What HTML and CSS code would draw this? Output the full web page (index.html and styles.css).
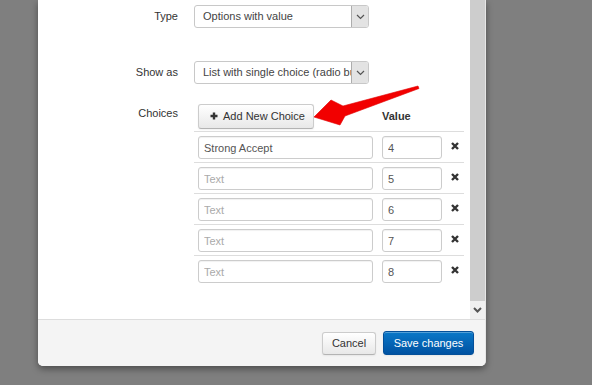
FILE: index.html
```html
<!DOCTYPE html>
<html>
<head>
<meta charset="utf-8">
<link rel="stylesheet" href="styles.css">
</head>
<body>
<div class="modal">
  <div class="modal-body">
    <div class="content">
      <div class="form-row">
        <label class="lbl">Type</label>
        <div class="select">
          <span class="select-text">Options with value</span>
          <span class="select-btn"><svg width="9" height="6" viewBox="0 0 9 6"><path d="M1 1 L4.5 4.5 L8 1" fill="none" stroke="#555" stroke-width="1.2"/></svg></span>
        </div>
      </div>
      <div class="form-row row-show">
        <label class="lbl">Show as</label>
        <div class="select">
          <span class="select-text">List with single choice (radio buttons)</span>
          <span class="select-btn"><svg width="9" height="6" viewBox="0 0 9 6"><path d="M1 1 L4.5 4.5 L8 1" fill="none" stroke="#555" stroke-width="1.2"/></svg></span>
        </div>
      </div>
      <div class="form-row row-choices">
        <label class="lbl lbl-top">Choices</label>
        <div class="choices">
          <div class="crow head">
            <div class="c1"><button class="btn btn-add"><svg class="plus" width="8" height="8" viewBox="0 0 8 8"><path d="M4 0.5 V7.5 M0.5 4 H7.5" stroke="#333" stroke-width="2.4"/></svg>Add New Choice</button></div>
            <div class="c2 vhead">Value</div>
            <div class="c3"></div>
          </div>
          <div class="crow">
            <div class="c1"><input class="inp inp-text" type="text" value="Strong Accept" placeholder="Text"></div>
            <div class="c2"><input class="inp inp-val" type="text" value="4"></div>
            <div class="c3"><svg class="rm" width="8" height="8" viewBox="0 0 8 8"><path d="M1 1 L7 7 M7 1 L1 7" stroke="#333" stroke-width="2.4"/></svg></div>
          </div>
          <div class="crow">
            <div class="c1"><input class="inp inp-text" type="text" placeholder="Text"></div>
            <div class="c2"><input class="inp inp-val" type="text" value="5"></div>
            <div class="c3"><svg class="rm" width="8" height="8" viewBox="0 0 8 8"><path d="M1 1 L7 7 M7 1 L1 7" stroke="#333" stroke-width="2.4"/></svg></div>
          </div>
          <div class="crow">
            <div class="c1"><input class="inp inp-text" type="text" placeholder="Text"></div>
            <div class="c2"><input class="inp inp-val" type="text" value="6"></div>
            <div class="c3"><svg class="rm" width="8" height="8" viewBox="0 0 8 8"><path d="M1 1 L7 7 M7 1 L1 7" stroke="#333" stroke-width="2.4"/></svg></div>
          </div>
          <div class="crow">
            <div class="c1"><input class="inp inp-text" type="text" placeholder="Text"></div>
            <div class="c2"><input class="inp inp-val" type="text" value="7"></div>
            <div class="c3"><svg class="rm" width="8" height="8" viewBox="0 0 8 8"><path d="M1 1 L7 7 M7 1 L1 7" stroke="#333" stroke-width="2.4"/></svg></div>
          </div>
          <div class="crow">
            <div class="c1"><input class="inp inp-text" type="text" placeholder="Text"></div>
            <div class="c2"><input class="inp inp-val" type="text" value="8"></div>
            <div class="c3"><svg class="rm" width="8" height="8" viewBox="0 0 8 8"><path d="M1 1 L7 7 M7 1 L1 7" stroke="#333" stroke-width="2.4"/></svg></div>
          </div>
        </div>
      </div>
    </div>
    <div class="scrollbar">
      <div class="thumb"></div>
      <div class="sb-btn"><svg width="9" height="6" viewBox="0 0 9 6"><path d="M1 1 L4.5 4.5 L8 1" fill="none" stroke="#555" stroke-width="2"/></svg></div>
    </div>
  </div>
  <div class="modal-footer">
    <button class="btn btn-cancel">Cancel</button>
    <button class="btn btn-primary">Save changes</button>
  </div>
</div>
<svg class="arrow" width="592" height="385" viewBox="0 0 592 385">
  <polygon points="418,86 343,106 331,100 314,117 340,125 345,116 419,88.5" fill="#f20000" stroke="#e00000" stroke-width="0.6" stroke-linejoin="round"/>
</svg>
</body>
</html>
```

FILE: styles.css
```css
html, body {
  margin: 0;
  padding: 0;
}
body {
  background: #7f7f7f;
  width: 592px;
  height: 385px;
  overflow: hidden;
  position: relative;
  font-family: "Liberation Sans", Arial, sans-serif;
  font-size: 11px;
  color: #333;
}
.modal {
  margin-left: 38px;
  width: 447px;
  border-right: 1px solid #e6e6e6;
  background: #fff;
  border-radius: 0 0 5px 5px;
  box-shadow: 0 3px 7px rgba(0, 0, 0, 0.4);
  overflow: hidden;
}
.modal-body {
  display: flex;
  height: 319px;
}
.content {
  flex: 1;
  padding-top: 5px;
  overflow: hidden;
}
.scrollbar {
  width: 15px;
  display: flex;
  flex-direction: column;
}
.thumb {
  flex: 1;
  background: #cdcdcd;
}
.sb-btn {
  height: 18px;
  background: #f0f0f0;
  display: flex;
  align-items: center;
  justify-content: center;
}
.form-row {
  display: grid;
  grid-template-columns: 140px auto;
  column-gap: 16px;
  align-items: center;
}
.row-show {
  margin-top: 33px;
}
.row-choices {
  margin-top: 17px;
  align-items: start;
}
.lbl {
  text-align: right;
  line-height: 23px;
}
.lbl-top {
  line-height: 16px;
  padding-top: 4px;
}
.select {
  width: 173px;
  height: 21px;
  border: 1px solid #c8c8c8;
  border-radius: 3px;
  display: flex;
  overflow: hidden;
  background: #fff;
}
.select-text {
  flex: 1;
  padding-left: 8px;
  line-height: 21px;
  color: #444;
  white-space: nowrap;
  overflow: hidden;
}
.select-btn {
  width: 16px;
  background: #e3e3e3;
  border-left: 1px solid #adadad;
  display: flex;
  align-items: center;
  justify-content: center;
}
.choices {
  width: 270px;
}
.crow {
  display: grid;
  grid-template-columns: 184px 64px 22px;
  border-top: 1px solid #dddddd;
  height: 30px;
}
.crow.head {
  border-top: none;
  height: 30px;
  align-items: center;
}
.c1 {
  padding: 4px 0 0 4px;
}
.c2 {
  padding: 4px 0 0 4px;
}
.c3 {
  padding: 10px 0 0 9px;
}
.head .c1, .head .c2, .head .c3 {
  padding-top: 0;
}
.vhead {
  font-weight: bold;
  color: #333;
}
.inp {
  box-sizing: border-box;
  height: 23px;
  border: 1px solid #cccccc;
  border-radius: 3px;
  padding: 0 5px;
  font-family: "Liberation Sans", Arial, sans-serif;
  font-size: 11px;
  color: #555;
  margin: 0;
  outline: none;
  box-shadow: inset 0 1px 1px rgba(0, 0, 0, 0.06);
}
.inp::placeholder {
  color: #aaa;
}
.inp-text {
  width: 175px;
}
.inp-val {
  width: 60px;
}
.rm {
  display: block;
}
.btn {
  font-family: "Liberation Sans", Arial, sans-serif;
  font-size: 11px;
  color: #333;
  background: linear-gradient(#ffffff, #e8e8e8);
  border: 1px solid #cccccc;
  border-bottom-color: #b3b3b3;
  border-radius: 3px;
  box-shadow: inset 0 1px 0 rgba(255, 255, 255, 0.3), 0 1px 2px rgba(0, 0, 0, 0.06);
  padding: 0;
  margin: 0;
  cursor: pointer;
}
.btn-add {
  width: 116px;
  height: 25px;
  display: flex;
  align-items: center;
  padding-left: 11px;
}
.plus {
  margin-right: 5px;
}
.modal-footer {
  border-top: 1px solid #dddddd;
  background: #f4f4f4;
  height: 46px;
  display: flex;
  align-items: center;
  justify-content: flex-end;
  gap: 7px;
  padding-right: 11px;
}
.btn-cancel {
  width: 54px;
  height: 23px;
}
.btn-primary {
  width: 91px;
  height: 24px;
  color: #fff;
  background: linear-gradient(#0a78c8, #0052a2);
  border: 1px solid #04509a;
}
.arrow {
  position: absolute;
  left: 0;
  top: 0;
  pointer-events: none;
}
```
